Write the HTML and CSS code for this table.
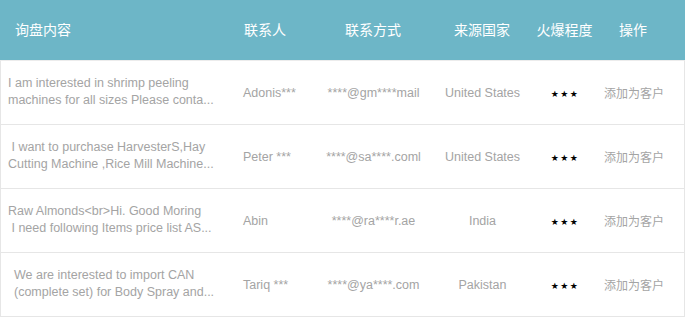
FILE: index.html
```html
<!DOCTYPE html>
<html lang="zh">
<head>
<meta charset="utf-8">
<link rel="stylesheet" href="styles.css">
</head>
<body>
<div class="table">
  <div class="row head">
    <div class="c1">询盘内容</div>
    <div class="c2">联系人</div>
    <div class="c3">联系方式</div>
    <div class="c4">来源国家</div>
    <div class="c5">火爆程度</div>
    <div class="c6">操作</div>
  </div>
  <div class="tbody">
    <div class="row">
      <div class="c1"><p class="msg">I am interested in shrimp peeling<br>machines for all sizes Please conta...</p></div>
      <div class="c2">Adonis***</div>
      <div class="c3">****@gm****mail</div>
      <div class="c4">United States</div>
      <div class="c5"><span class="stars">★★★</span></div>
      <div class="c6">添加为客户</div>
    </div>
    <div class="row">
      <div class="c1"><p class="msg">&nbsp;I want to purchase HarvesterS,Hay<br>Cutting Machine ,Rice Mill Machine...</p></div>
      <div class="c2">Peter ***</div>
      <div class="c3">****@sa****.coml</div>
      <div class="c4">United States</div>
      <div class="c5"><span class="stars">★★★</span></div>
      <div class="c6">添加为客户</div>
    </div>
    <div class="row">
      <div class="c1"><p class="msg">Raw Almonds&lt;br&gt;Hi. Good Moring<br>&nbsp;I need following Items price list AS...</p></div>
      <div class="c2">Abin</div>
      <div class="c3">****@ra****r.ae</div>
      <div class="c4">India</div>
      <div class="c5"><span class="stars">★★★</span></div>
      <div class="c6">添加为客户</div>
    </div>
    <div class="row">
      <div class="c1"><p class="msg indent">We are interested to import CAN<br>(complete set) for Body Spray and...</p></div>
      <div class="c2">Tariq ***</div>
      <div class="c3">****@ya****.com</div>
      <div class="c4">Pakistan</div>
      <div class="c5"><span class="stars">★★★</span></div>
      <div class="c6">添加为客户</div>
    </div>
  </div>
</div>
</body>
</html>
```
FILE: styles.css
```css
* { box-sizing: border-box; }
html, body { margin: 0; padding: 0; background: #fff; }
body {
  font-family: "Liberation Sans", "Noto Sans CJK SC", sans-serif;
  width: 685px;
  height: 317px;
  overflow: hidden;
}
.table { width: 685px; }
.row {
  display: grid;
  grid-template-columns: 235px 70px 136px 82px 77px 85px;
  align-items: center;
}
.head {
  height: 60px;
  padding-bottom: 3px;
  background: #6db6c7;
  color: #fff;
  font-family: "Noto Sans CJK SC", sans-serif;
  font-size: 14px;
}
.head .c1 { padding-left: 15px; }
.head .c2 { padding-left: 9px; }
.head .c6 { padding-left: 19px; }
.tbody {
  border-top: 1px solid #ececec;
  border-left: 1px solid #e6e6e6;
  border-right: 1px solid #e6e6e6;
}
.tbody .row {
  height: 64px;
  border-bottom: 1px solid #e6e6e6;
  font-size: 12.5px;
  color: #a4a4a4;
}
.tbody .row > div { margin-left: -1px; white-space: nowrap; }
.c3, .c4 { text-align: center; }
.c5 { text-align: center; padding-left: 6px; }
.tbody .c2 { padding-left: 8px; }
.tbody .c6 { padding-left: 4px; font-family: "Noto Sans CJK SC", sans-serif; font-size: 12px; }
.msg {
  margin: 0;
  padding-left: 8px;
  line-height: 17px;
  font-size: 12.5px;
  margin-top: -2px;
}
.msg.indent { padding-left: 14px; }
.stars {
  color: #000;
  font-family: "DejaVu Sans", sans-serif;
  font-size: 9px;
  letter-spacing: 1.5px;
}
```
